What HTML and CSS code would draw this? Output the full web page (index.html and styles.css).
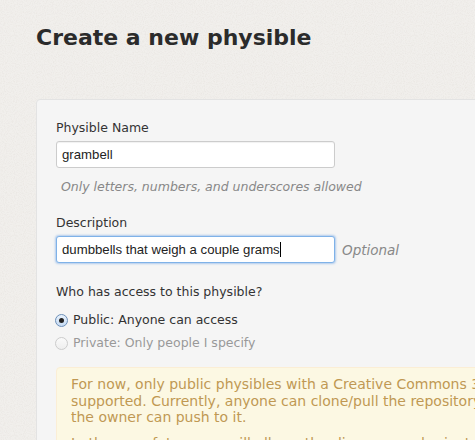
FILE: index.html
```html
<!DOCTYPE html>
<html>
<head>
<meta charset="utf-8">
<link rel="stylesheet" href="styles.css">
</head>
<body>
<div class="page">
  <h1 class="title">Create a new physible</h1>
  <div class="panel">
    <div class="field">
      <label class="label">Physible Name</label>
      <div class="input">grambell</div>
      <p class="hint">Only letters, numbers, and underscores allowed</p>
    </div>
    <div class="field">
      <label class="label">Description</label>
      <div class="row">
        <div class="input focused">dumbbells that weigh a couple grams<span class="caret"></span></div>
        <span class="optional">Optional</span>
      </div>
    </div>
    <p class="question">Who has access to this physible?</p>
    <div class="radio"><span class="dot checked"></span>Public: Anyone can access</div>
    <div class="radio disabled"><span class="dot"></span>Private: Only people I specify</div>
    <div class="alert">
      <p class="alert-p">For now, only public physibles with a Creative Commons 3.0 license are<br>supported. Currently, anyone can clone/pull the repository. Only<br>the owner can push to it.</p>
      <p class="alert-p">In the near future, we will allow other licenses and private physibles.</p>
    </div>
  </div>
</div>
</body>
</html>
```
FILE: styles.css
```css
html, body {
  margin: 0;
  padding: 0;
}
body {
  width: 475px;
  height: 440px;
  overflow: hidden;
  background-color: #f1efec;
  background-image: url("data:image/svg+xml;utf8,<svg xmlns='http://www.w3.org/2000/svg' width='200' height='200'><filter id='n'><feTurbulence type='fractalNoise' baseFrequency='0.9' numOctaves='2' stitchTiles='stitch'/><feColorMatrix values='0 0 0 0 0.55  0 0 0 0 0.5  0 0 0 0 0.45  0 0 0 0.9 -0.35'/></filter><rect width='200' height='200' filter='url(%23n)' opacity='0.35'/></svg>");
  font-family: "DejaVu Sans", sans-serif;
  font-size: 12.5px;
  color: #333;
}
.page {
  padding: 21px 0 0 36px;
}
.title {
  margin: 0;
  font-size: 22px;
  line-height: 34px;
  font-weight: bold;
  color: #2b2b2b;
}
.panel {
  margin-top: 44px;
  width: 600px;
  background: #f5f5f5;
  border: 1px solid #e3e3e3;
  border-radius: 4px;
  padding: 19px 19px 15px;
}
.field {
  margin-bottom: 18px;
}
.label {
  display: block;
  line-height: 18px;
  margin-bottom: 4px;
}
.input {
  box-sizing: border-box;
  width: 279px;
  height: 27px;
  padding: 0 5px;
  background: #fff;
  border: 1px solid #ccc;
  border-radius: 3px;
  font-family: "Liberation Sans", Arial, sans-serif;
  font-size: 13.2px;
  line-height: 25px;
  color: #222;
  box-shadow: inset 0 1px 1px rgba(0,0,0,0.06);
}
.input.focused {
  border-color: #7fb2e8;
  box-shadow: 0 0 2px 1px rgba(120,170,230,0.55);
}
.caret {
  display: inline-block;
  width: 1px;
  height: 15px;
  background: #000;
  vertical-align: -3px;
}
.hint {
  margin: 10px 0 0 5px;
  font-style: italic;
  color: #888;
  line-height: 18px;
}
.row {
  display: flex;
  align-items: center;
  gap: 7px;
}
.optional {
  font-style: italic;
  color: #888;
  font-size: 13.5px;
}
.question {
  margin: 20px 0 10px;
  line-height: 18px;
}
.radio {
  display: flex;
  align-items: center;
  gap: 5px;
  line-height: 18px;
  margin-bottom: 5px;
  margin-left: -1px;
}
.radio.disabled {
  color: #999;
}
.dot {
  box-sizing: border-box;
  width: 13px;
  height: 13px;
  border-radius: 50%;
  border: 1px solid #a9a9a9;
  background: linear-gradient(#fff, #ececec);
  display: flex;
  align-items: center;
  justify-content: center;
}
.dot.checked {
  border-color: #6c8fb8;
  background: linear-gradient(#e9f2fc, #c5daf3);
}
.dot.checked::after {
  content: "";
  width: 5px;
  height: 5px;
  border-radius: 50%;
  background: #222;
}
.radio.disabled .dot {
  border-color: #ccc;
  background: linear-gradient(#fafafa, #eee);
}
.alert {
  margin-top: 15px;
  background: #fcf8e3;
  border: 1px solid #fbeed5;
  border-radius: 4px;
  padding: 8px 14px;
  color: #c09853;
  font-size: 14px;
}
.alert-p {
  margin: 0 0 9px;
  line-height: 16.5px;
  white-space: nowrap;
}
```
